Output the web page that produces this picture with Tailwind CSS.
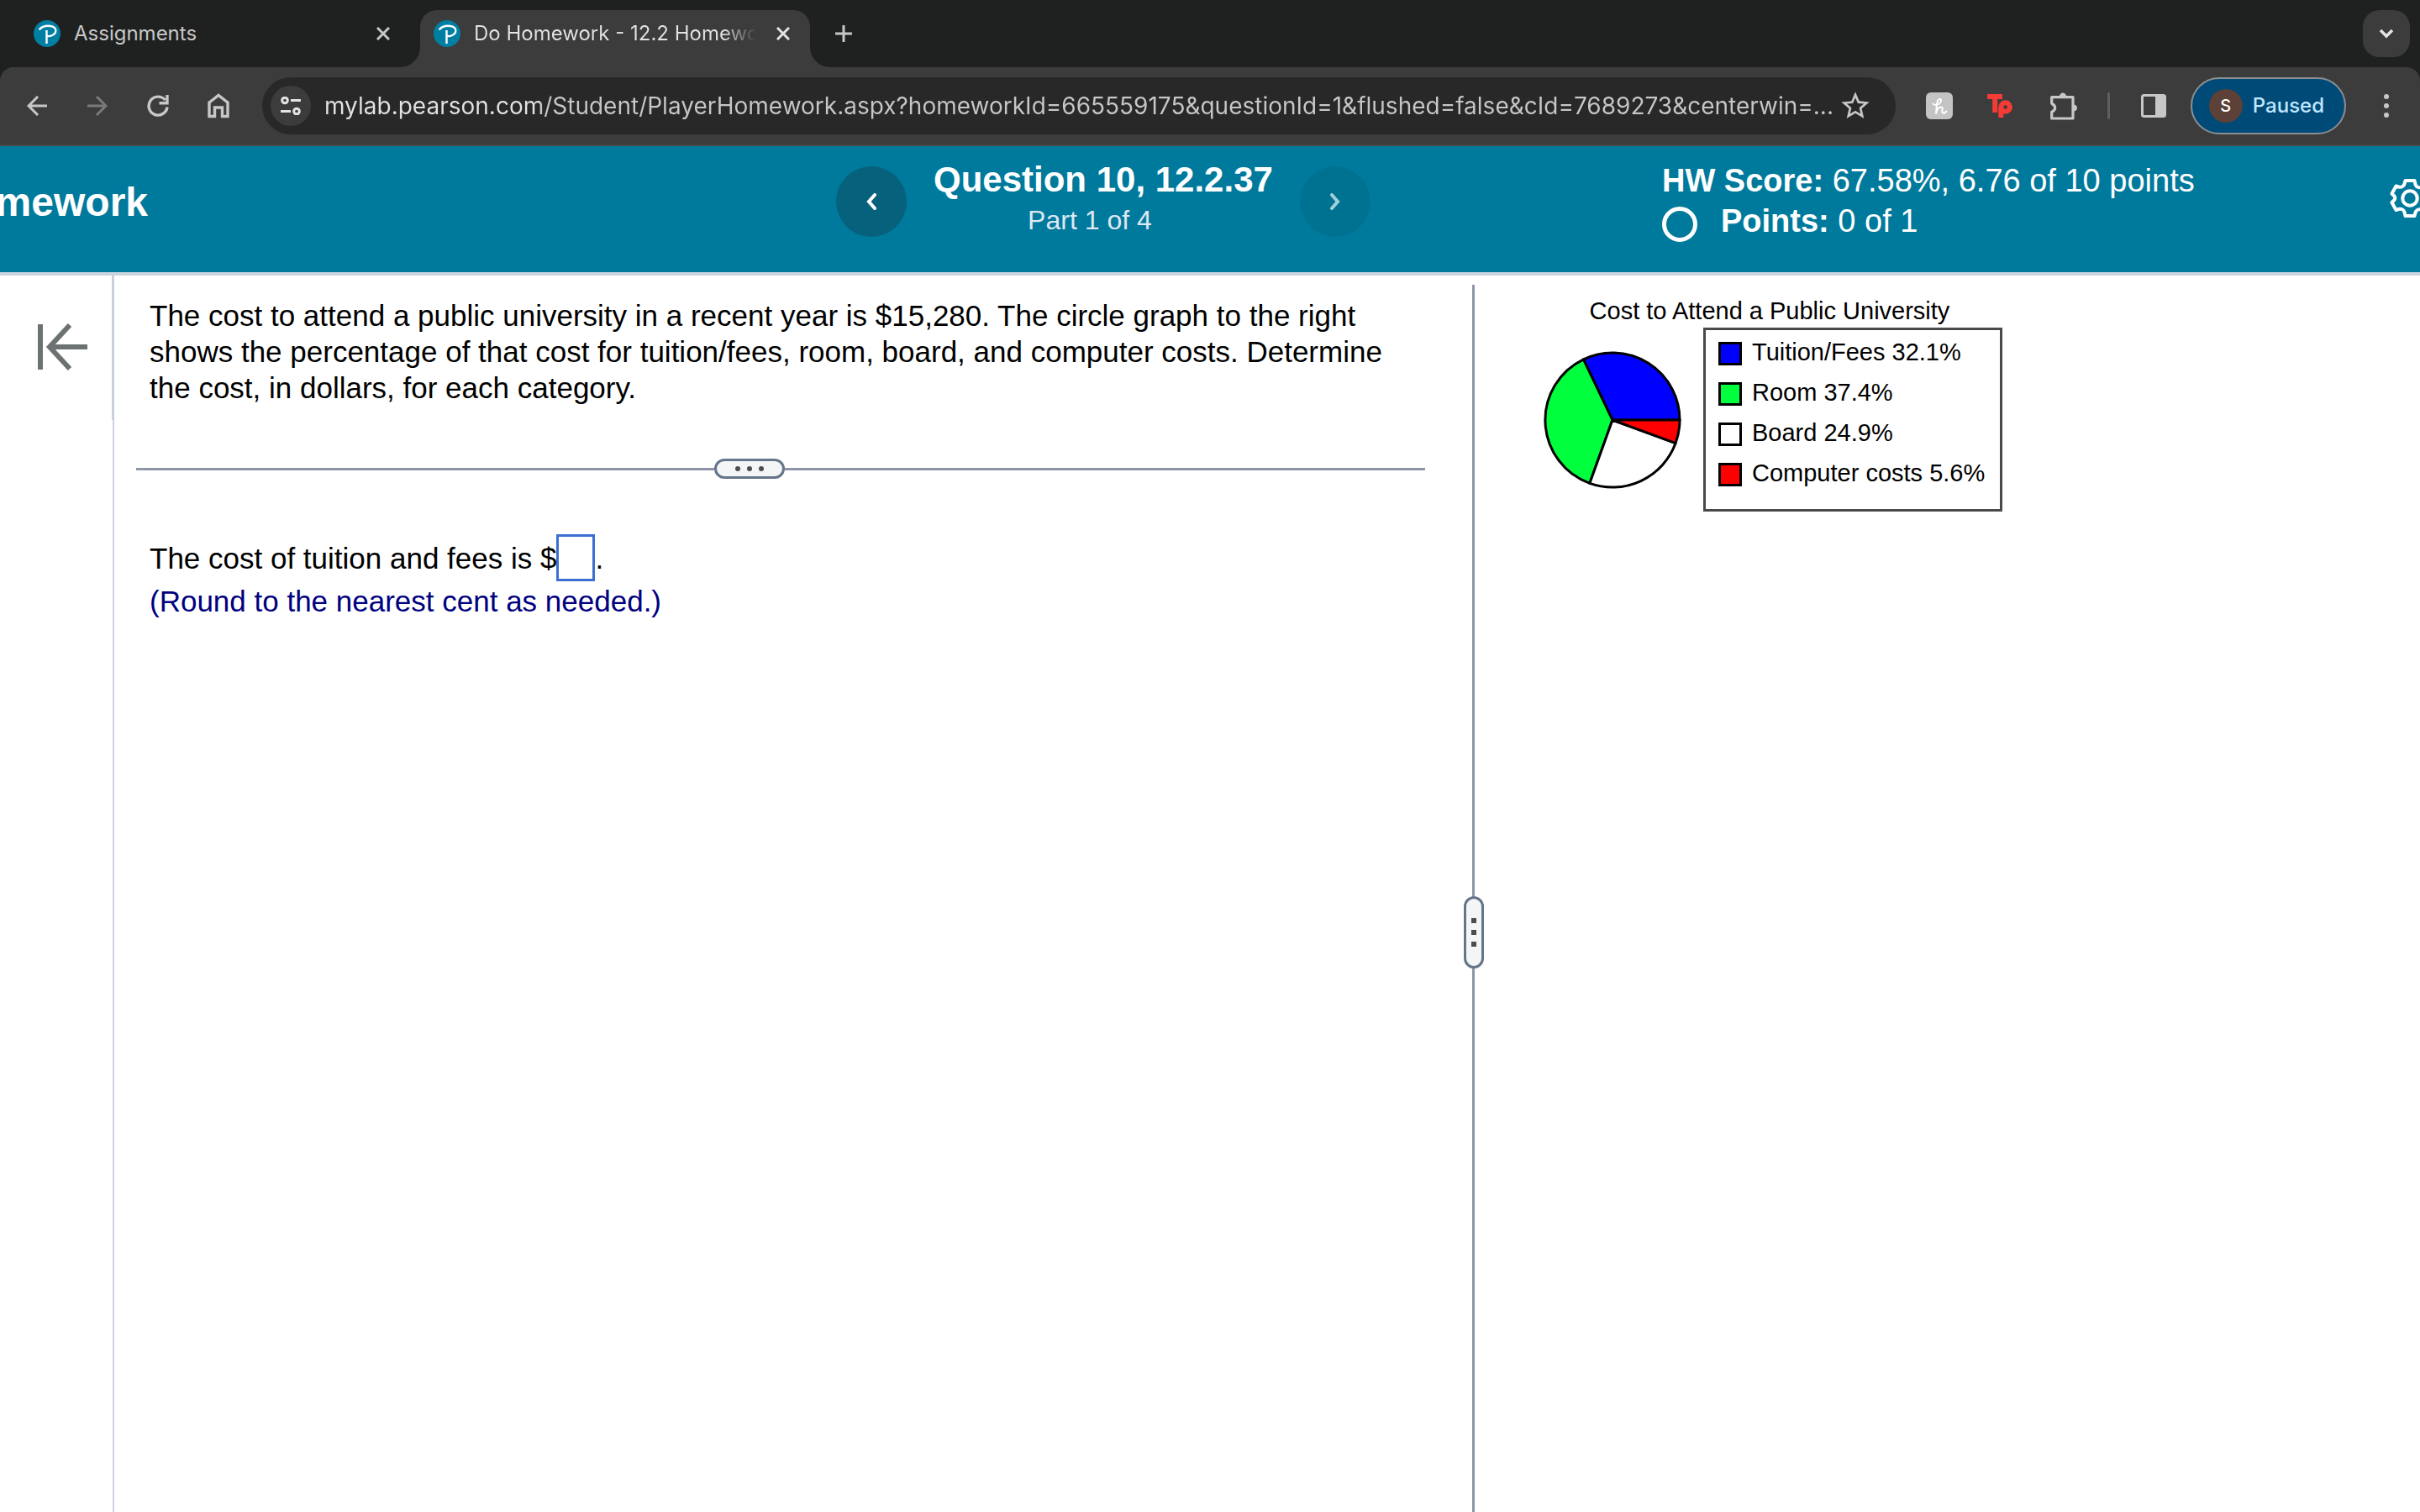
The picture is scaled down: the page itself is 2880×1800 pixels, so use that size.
<!DOCTYPE html>
<html lang="en">
<head>
    <meta charset="UTF-8">
    <meta name="viewport" content="width=device-width, initial-scale=1.0">
    <title>Do Homework - 12.2 Homework</title>
    <script src="https://cdn.jsdelivr.net/npm/@tailwindcss/browser@4"></script>
</head>
<body class="flex min-h-screen flex-col overflow-x-hidden bg-white font-['Liberation_Sans',Arial,sans-serif] text-black">

    <!-- Browser tabs -->
    <div class="flex h-20 items-end bg-[#1f2120] font-[Inter,sans-serif] text-2xl">
        <div class="flex h-[68px] w-[500px] items-start pt-3 pr-7 pl-10 text-[#c7c7c7]">
            <svg class="size-8 shrink-0" viewBox="0 0 32 32" fill="none">
                <circle cx="16" cy="16" r="16" fill="#007fa3"/>
                <path d="M6.500 11.500c3-3.500 8-5.200 13.500-4.500 5 .7 7.300 3.500 6.200 7-1.200 3.500-5.700 5.500-10.200 5M15.500 12v16" stroke="#fff" stroke-width="2.400"/>
            </svg>
            <a href="#" class="ml-4 flex-1 leading-8">Assignments</a>
            <button aria-label="Close tab" class="flex size-8 items-center justify-center">
                <svg class="size-4" viewBox="0 0 16 16" stroke="currentColor" stroke-width="3"><path d="M1 1l14 14M15 1L1 15"/></svg>
            </button>
        </div>
        <div class="relative flex h-[68px] w-[464px] items-start rounded-t-[20px] bg-[#3c3c3c] pt-3 pr-4 pl-4 text-[#e3e3e3]">
            <svg class="absolute bottom-0 -left-6 size-6" viewBox="0 0 24 24"><path d="M24 0v24H0A24 24 0 0 0 24 0z" fill="#3c3c3c"/></svg>
            <svg class="absolute -right-6 bottom-0 size-6" viewBox="0 0 24 24"><path d="M0 0v24h24A24 24 0 0 1 0 0z" fill="#3c3c3c"/></svg>
            <svg class="size-8 shrink-0" viewBox="0 0 32 32" fill="none">
                <circle cx="16" cy="16" r="16" fill="#007fa3"/>
                <path d="M6.500 11.500c3-3.500 8-5.200 13.500-4.500 5 .7 7.300 3.500 6.200 7-1.200 3.500-5.700 5.500-10.200 5M15.500 12v16" stroke="#fff" stroke-width="2.400"/>
            </svg>
            <a href="#" class="ml-4 flex-1 overflow-hidden bg-linear-to-r from-[#e3e3e3] from-88% to-[#3c3c3c] bg-clip-text leading-8 whitespace-nowrap text-transparent">Do Homework - 12.2 Homework</a>
            <button aria-label="Close tab" class="ml-4 flex size-8 items-center justify-center">
                <svg class="size-4" viewBox="0 0 16 16" stroke="currentColor" stroke-width="3"><path d="M1 1l14 14M15 1L1 15"/></svg>
            </button>
        </div>
        <button aria-label="New tab" class="mb-6 ml-6 flex size-8 items-center justify-center self-end text-[#c7c7c7]">
            <svg class="size-5" viewBox="0 0 20 20" stroke="currentColor" stroke-width="3"><path d="M10 0v20M0 10h20"/></svg>
        </button>
        <button aria-label="Search tabs" class="mr-3 mb-3 ml-auto flex size-14 items-center justify-center rounded-[20px] bg-[#3c3c3c] text-[#e3e3e3]">
            <svg class="h-3 w-5" viewBox="0 0 20 12" fill="none" stroke="currentColor" stroke-width="3.500"><path d="M3 2l7 7 7-7"/></svg>
        </button>
    </div>

    <!-- Toolbar -->
    <div class="bg-[#1f2120] font-[Inter,sans-serif]">
        <div class="flex h-[94px] items-center rounded-t-2xl border-b-2 border-[#4a4a4a] bg-[#3c3c3c] pr-5 pl-6 text-[#c7c7c7]">
            <div class="flex gap-8">
                <button aria-label="Back" class="flex size-10 items-center justify-center">
                    <svg class="size-6" viewBox="0 0 24 24" fill="none" stroke="currentColor" stroke-width="3"><path d="M24 12H3M13 1L2 12l11 11"/></svg>
                </button>
                <button aria-label="Forward" class="flex size-10 items-center justify-center text-[#7a7a7a]">
                    <svg class="size-6" viewBox="0 0 24 24" fill="none" stroke="currentColor" stroke-width="3"><path d="M0 12h21M11 1l11 11-11 11"/></svg>
                </button>
                <button aria-label="Reload" class="flex size-10 items-center justify-center">
                    <svg class="size-[26px]" viewBox="0 0 26 26" fill="none" stroke="currentColor" stroke-width="3.400"><path d="M24 14.500A11 11 0 1 1 21.500 6M24 0v9.700h-9.500"/></svg>
                </button>
                <button aria-label="Home" class="flex size-10 items-center justify-center">
                    <svg class="h-[30px] w-[26px]" viewBox="0 0 26 30" fill="none" stroke="currentColor" stroke-width="3.400"><path d="M2 27.500V11L13 2.500 24 11v16.500h-6.500V17h-9v10.500z"/></svg>
                </button>
            </div>

            <div class="ml-8 flex h-[68px] flex-1 items-center rounded-full bg-[#282828] pr-7 pl-[10px]">
                <button aria-label="Site information" class="flex size-12 items-center justify-center rounded-full bg-[#3c3c3c] text-[#e3e3e3]">
                    <svg class="h-[22px] w-6" viewBox="0 0 24 22" fill="none" stroke="currentColor" stroke-width="3"><circle cx="5" cy="4.500" r="3.300"/><path d="M12 4.500h12M0 17.500h12"/><circle cx="19" cy="17.500" r="3.300"/></svg>
                </button>
                <input aria-label="Address" type="text" value="mylab.pearson.com/Student/PlayerHomework.aspx?homeworkId=665559175&amp;questionId=1&amp;flushed=false&amp;cId=7689273&amp;centerwin=..." class="ml-4 min-w-0 flex-1 bg-linear-to-r from-[#e3e3e3] from-[256px] to-[#c7c7c7] to-[256px] bg-clip-text text-[28px] text-transparent outline-none">
                <button aria-label="Bookmark this tab" class="flex size-10 items-center justify-center">
                    <svg class="size-10" viewBox="0 0 24 24" fill="currentColor"><path d="M22 9.240l-7.190-.62L12 2 9.190 8.630 2 9.240l5.460 4.730L5.820 21 12 17.270 18.180 21l-1.630-7.030L22 9.240zM12 15.400l-3.760 2.270 1-4.280-3.320-2.880 4.380-.38L12 6.100l1.710 4.040 4.380.38-3.320 2.880 1 4.280L12 15.400z"/></svg>
                </button>
            </div>

            <div class="ml-8 flex items-center">
                <button aria-label="Honey" class="flex size-10 items-center justify-center">
                    <svg class="size-8" viewBox="0 0 32 32"><rect width="32" height="32" rx="6" fill="#c4c4c4"/><path d="M8.500 13.500c1 1.500 4 2 6.500.5 3-2 4-5.500 2-6s-3.500 2-4 6L12 25.500c1-4.500 3.500-8 6-8 3.500 0 .5 4.500 1.500 6.500.8 1.300 3 .6 5-1.500" fill="none" stroke="#fff" stroke-width="2" stroke-linecap="round"/></svg>
                </button>
                <button aria-label="Teachers Pay" class="ml-8 flex size-10 items-center justify-center">
                    <svg class="h-7 w-[30px]" viewBox="0 0 30 28" fill="none" stroke="#f43b35" stroke-width="6"><path d="M0 3h18M9.200 3v19M16.300 15.500V28"/><circle cx="21.600" cy="15.500" r="5.300"/></svg>
                </button>
                <button aria-label="Extensions" class="ml-9 flex size-10 items-center justify-center">
                    <svg class="size-9" viewBox="0 0 36 36" fill="none" stroke="currentColor" stroke-width="3.200" stroke-linejoin="round"><path d="M3.700 7.700h25.300v25.300h-25.300v-7.500c5.300-2.700 5.300-7.800 0-10.300z"/><path d="M13 7c0-6 8-6 8 0zM29.500 16.500c6 0 6 8 0 8z" fill="currentColor" stroke="none"/></svg>
                </button>
                <span class="ml-8 h-8 w-[3px] rounded-full bg-[#5f5f5f]"></span>
                <button aria-label="Side panel" class="ml-8 flex size-10 items-center justify-center">
                    <svg class="h-7 w-[30px]" viewBox="0 0 30 28"><rect x="1.500" y="1.500" width="27" height="25" rx="2" fill="none" stroke="currentColor" stroke-width="3"/><path d="M17 1h11v26H17z" fill="currentColor"/></svg>
                </button>
                <button class="ml-6 flex h-[68px] items-center gap-3 rounded-full border-2 border-[#8b8f92] bg-[#004a77] pr-6 pl-5 text-2xl font-medium text-[#c2e7ff]">
                    <span class="flex size-10 items-center justify-center rounded-full bg-[#5d4037] text-xl text-white">S</span>
                    Paused
                </button>
                <button aria-label="Menu" class="ml-7 flex size-10 items-center justify-center">
                    <svg class="h-7 w-[6px]" viewBox="0 0 6 28" fill="currentColor"><circle cx="3" cy="3" r="3"/><circle cx="3" cy="14" r="3"/><circle cx="3" cy="25" r="3"/></svg>
                </button>
            </div>
        </div>
    </div>

    <!-- Assignment header -->
    <header class="grid h-[154px] grid-cols-[995fr_983fr_902fr] overflow-hidden border-b-4 border-[#c8d5de] bg-[#007a9c] text-white">
        <div class="flex w-44 justify-end pt-10">
            <h1 class="text-5xl leading-[54px] font-bold">Homework</h1>
        </div>
        <div class="flex items-start">
            <button aria-label="Previous question" class="mt-6 flex size-[84px] items-center justify-center rounded-full bg-[#06617c]">
                <svg class="h-5 w-3" viewBox="0 0 12 20" fill="none" stroke="currentColor" stroke-width="4" stroke-linecap="round"><path d="M10 2L3 10l7 8"/></svg>
            </button>
            <div class="mt-4 px-8 text-center">
                <h2 class="text-[42px] leading-[48px] font-bold">Question 10, 12.2.37</h2>
                <p class="pr-8 text-[32px] leading-[48px] text-[#dfe7f3]">Part 1 of 4</p>
            </div>
            <button aria-label="Next question" class="mt-6 flex size-[84px] items-center justify-center rounded-full bg-[#007291] text-[#a3cfdc]" disabled>
                <svg class="h-5 w-3" viewBox="0 0 12 20" fill="none" stroke="currentColor" stroke-width="4" stroke-linecap="round"><path d="M2 2l7 8-7 8"/></svg>
            </button>
        </div>
        <div class="flex items-start">
            <div class="pt-[18px] text-[38px] leading-[46px]">
                <p><b>HW Score:</b> 67.58%, 6.76 of 10 points</p>
                <p class="flex items-center"><span class="mt-2 mr-7 size-[42px] rounded-full border-5 border-white"></span><span><b>Points:</b> 0 of 1</span></p>
            </div>
            <button aria-label="Settings" class="mt-[38px] -mr-3 ml-auto shrink-0">
                <svg class="size-12" viewBox="0 0 48 48" fill="none" stroke="currentColor" stroke-width="4" stroke-linejoin="round">
                    <path d="M18.500 3h11l1 4.500c1 3 4 4.500 7 3.500l3-1 5 9-3 3c-1 1.500-1 3 0 4.500l3 3-5 9-3-1c-3-1-6 .5-7 3.500l-1 4h-11l-1-4.500c-1-3-4-4.500-7-3.500l-3 1-5-9 3-3c1-1.500 1-3 0-4.500l-3-3 5-9 3 1c3 1 6-.5 7-3.500z"/>
                    <circle cx="24" cy="24" r="8.700"/>
                </svg>
            </button>
        </div>
    </header>

    <!-- Question area -->
    <main class="grid flex-1 grid-cols-[136px_1616fr_3px_1125fr]">
        <aside class="flex flex-col">
            <div class="h-[172px] border-r-3 border-[#c8cfdd] pt-[54px] pl-11">
                <button aria-label="Collapse panel" class="block">
                    <svg class="h-[62px] w-[62px]" viewBox="0 0 62 62" fill="none" stroke="#6c7272" stroke-width="6"><path d="M4 4v54M60 31H16M39 5L15 31l24 26"/></svg>
                </button>
            </div>
            <div class="flex-1 border-r-2 border-[#cdd3e0]"></div>
        </aside>

        <section class="pt-[26px] pr-14 pl-[26px] text-[35px] leading-[43px]">
            <p class="px-4">The cost to attend a public university in a recent year is $15,280. The circle graph to the right shows the percentage of that cost for tuition/fees, room, board, and computer costs. Determine the cost, in dollars, for each category.</p>

            <div class="mt-[63px] flex items-center">
                <span class="h-[3px] flex-[688] bg-[#8e95a7]"></span>
                <button aria-label="Resize" class="flex h-6 w-[84px] items-center justify-center gap-2 rounded-full border-3 border-[#65758a] bg-[#f4f5f7]">
                    <span class="size-[6px] rounded-full bg-[#4d4d4d]"></span>
                    <span class="size-[6px] rounded-full bg-[#4d4d4d]"></span>
                    <span class="size-[6px] rounded-full bg-[#4d4d4d]"></span>
                </button>
                <span class="h-[3px] flex-[762] bg-[#8e95a7]"></span>
            </div>

            <div class="mt-[66px] px-4">
                <div class="flex h-14 items-center">
                    <label for="answer">The cost of tuition and fees is $</label>
                    <input id="answer" type="text" class="h-14 w-[46px] border-3 border-[#3b6fd1] px-1 outline-none">
                    <span>.</span>
                </div>
                <p class="mt-[2px] text-[#000080]">(Round to the nearest cent as needed.)</p>
            </div>
        </section>

        <div class="relative mt-[11px] bg-[#8e95a7]">
            <button aria-label="Resize columns" class="absolute top-[728px] left-1/2 flex h-[86px] w-6 -translate-x-1/2 flex-col items-center justify-center gap-2 rounded-full border-3 border-[#65758a] bg-[#f4f5f7]">
                <span class="size-[6px] bg-[#4d4d4d]"></span>
                <span class="size-[6px] bg-[#4d4d4d]"></span>
                <span class="size-[6px] bg-[#4d4d4d]"></span>
            </button>
        </div>

        <section class="pt-6 pl-[82px] text-[29px] leading-9">
            <figure class="w-[546px]">
                <figcaption class="pr-2 text-center">Cost to Attend a Public University</figcaption>
                <div class="mt-[2px] flex items-start justify-between">
                    <svg class="mt-7 size-[164px]" viewBox="-82 -82 164 164" stroke="#000" stroke-width="3" stroke-linejoin="round">
                        <path d="M0 0H80A80 80 0 0 0 -34.500 -72.200z" fill="#00f"/>
                        <path d="M0 0L-34.500 -72.200A80 80 0 0 0 -27.100 75.300z" fill="#00ff3c"/>
                        <path d="M0 0L-27.100 75.300A80 80 0 0 0 75.100 27.600z" fill="#fff"/>
                        <path d="M0 0L75.100 27.600A80 80 0 0 0 80 0z" fill="#f00"/>
                    </svg>
                    <ul class="flex h-[219px] w-[356px] flex-col gap-3 border-3 border-[#4a4a4a] pt-2 pl-[15px] whitespace-nowrap">
                        <li class="flex items-center gap-3"><span class="mt-1 size-7 border-3 bg-[#00f]"></span>Tuition/Fees 32.1%</li>
                        <li class="flex items-center gap-3"><span class="mt-1 size-7 border-3 bg-[#00ff3c]"></span>Room 37.4%</li>
                        <li class="flex items-center gap-3"><span class="mt-1 size-7 border-3 bg-white"></span>Board 24.9%</li>
                        <li class="flex items-center gap-3"><span class="mt-1 size-7 border-3 bg-[#f00]"></span>Computer costs 5.6%</li>
                    </ul>
                </div>
            </figure>
        </section>
    </main>
</body>
</html>
